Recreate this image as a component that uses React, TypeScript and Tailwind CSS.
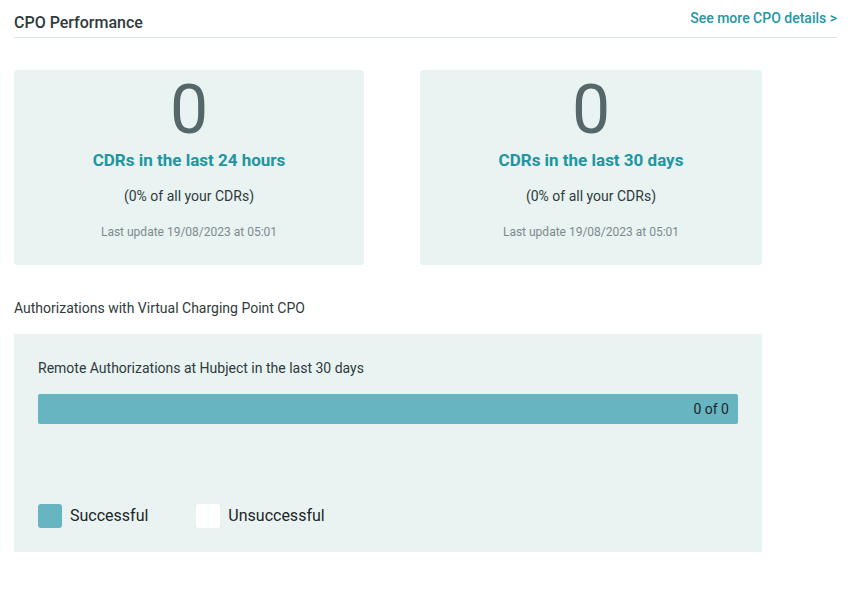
const font = { fontFamily: "Roboto, 'Liberation Sans', sans-serif" };

function StatCard({ label }: { label: string }) {
  return (
    <div className="flex h-[195px] flex-col items-center rounded-[3px] bg-[#e9f3f2] pt-[6px]">
      <div className="text-[68px] leading-[68px] text-[#56676a]">0</div>
      <div className="mt-[6px] text-[17px] font-bold leading-5 text-[#2195a1]">{label}</div>
      <div className="mt-[17px] text-[14px] leading-[18px] text-[#2f3a3c]">(0% of all your CDRs)</div>
      <div className="mt-[19px] text-[12px] leading-4 text-[#7d8a8c]">Last update 19/08/2023 at 05:01</div>
    </div>
  );
}

export default function App() {
  return (
    <div className="min-h-[592px] w-[854px] bg-white px-[14px] pt-[8px]" style={font}>
      <div className="mr-[3px] flex items-start justify-between border-b border-[#d6e5ea] pb-[6px]">
        <h2 className="pt-[6px] text-[16px] font-medium leading-[17px] text-[#2f3a3c]">CPO Performance</h2>
        <a className="text-[14px] font-medium leading-5 text-[#2597a3]">See more CPO details &gt;</a>
      </div>

      <div className="mt-[32px] grid w-[748px] grid-cols-[350px_342px] gap-[56px]">
        <StatCard label="CDRs in the last 24 hours" />
        <StatCard label="CDRs in the last 30 days" />
      </div>

      <div className="mt-[34px] text-[14px] leading-[18px] text-[#2f3a3c]">
        Authorizations with Virtual Charging Point CPO
      </div>

      <div className="mt-[17px] h-[218px] w-[748px] bg-[#e9f3f2] px-[24px] pt-[25px]">
        <div className="text-[14px] leading-[18px] text-[#2f3a3c]">
          Remote Authorizations at Hubject in the last 30 days
        </div>
        <div className="mt-[17px] flex h-[30px] items-center justify-end rounded-[2px] bg-[#68b5c2] pr-[9px]">
          <span className="text-[14px] text-[#1c2628]">0 of 0</span>
        </div>
        <div className="mt-[80px] flex items-center">
          <span className="h-6 w-6 rounded-[3px] bg-[#68b5c2]" />
          <span className="ml-2 text-[16px] text-[#1c2628]">Successful</span>
          <span className="ml-[48px] h-6 w-6 rounded-[3px] bg-white" />
          <span className="ml-2 text-[16px] text-[#1c2628]">Unsuccessful</span>
        </div>
      </div>
    </div>
  );
}
